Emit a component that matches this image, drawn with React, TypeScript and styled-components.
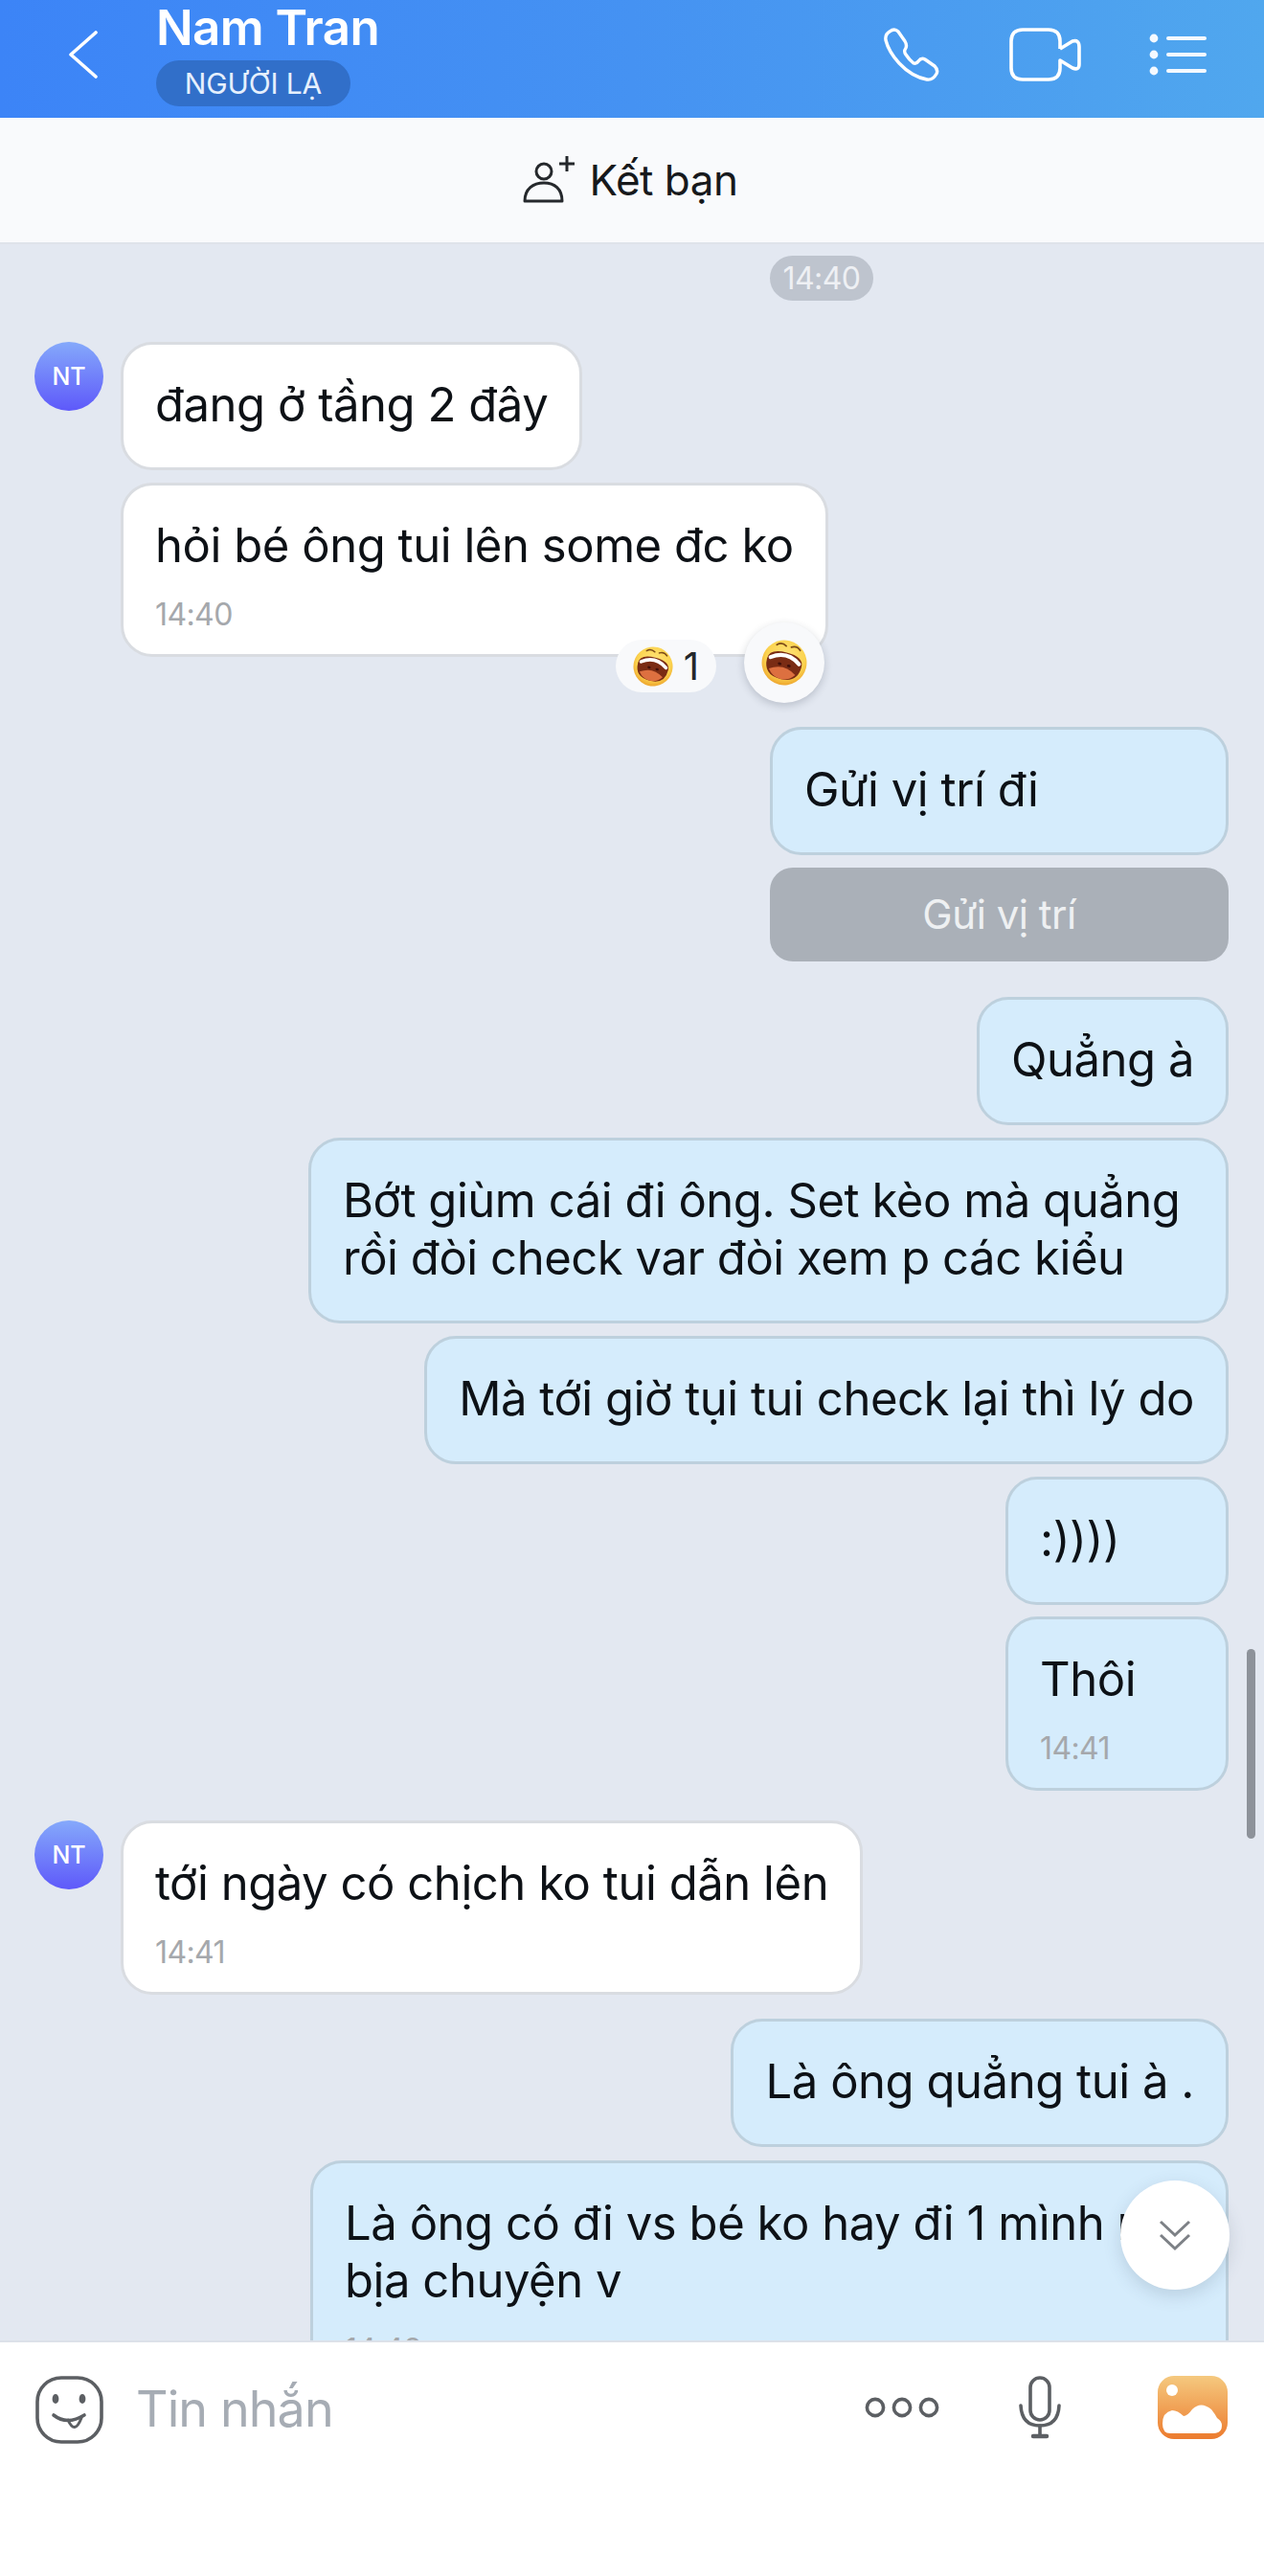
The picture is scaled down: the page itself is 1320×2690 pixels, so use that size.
import React from "react";
import styled, { createGlobalStyle } from "styled-components";

const GlobalStyle = createGlobalStyle`
  html, body { margin: 0; padding: 0; }
  body { font-family: Inter, "Noto Sans", "Liberation Sans", sans-serif; background: #e3e8f1; }
  * { box-sizing: border-box; }
`;

const Screen = styled.div`
  width: 1320px;
  height: 2690px;
  display: flex;
  flex-direction: column;
  overflow: hidden;
  position: relative;
`;

const Header = styled.header`
  height: 123px;
  flex: none;
  display: flex;
  align-items: center;
  padding: 0 60px 10px 70px;
  background: linear-gradient(90deg, #3c84f7 0%, #4592f2 50%, #50a7ee 100%);
`;

const BackIcon = styled.svg`
  width: 34px;
  height: 50px;
  flex: none;
`;

const TitleBlock = styled.div`
  margin-left: 59px;
  align-self: flex-start;
  display: flex;
  flex-direction: column;
  align-items: flex-start;
  padding-top: 3px;
`;

const Name = styled.div`
  font-size: 51px;
  line-height: 52px;
  font-weight: 600;
  letter-spacing: -0.6px;
  color: #fff;
`;

const Badge = styled.div`
  margin-top: 8px;
  width: 203px;
  height: 48px;
  border-radius: 24px;
  background: #316fc9;
  color: #e6f0fd;
  font-size: 30px;
  line-height: 48px;
  text-align: center;
  letter-spacing: -0.1px;
`;

const HeaderActions = styled.div`
  margin-left: auto;
  display: flex;
  align-items: center;
  gap: 71px;
`;

const FriendBar = styled.div`
  height: 132px;
  flex: none;
  display: flex;
  justify-content: center;
  align-items: center;
  gap: 15px;
  background: #f9fafc;
  border-bottom: 2px solid #dfe3ea;
  color: #17191c;
  font-size: 44px;
  letter-spacing: -0.5px;
  padding-right: 4px;
`;

const Chat = styled.main`
  flex: 1;
  min-height: 0;
  overflow: hidden;
  position: relative;
  background: #e3e8f1;
  padding: 12px 37px 0 36px;
`;

const TimePill = styled.div`
  margin-left: 768px;
  width: 108px;
  height: 47px;
  border-radius: 24px;
  background: #bec4ce;
  color: #eef0f4;
  font-size: 32px;
  line-height: 47px;
  text-align: center;
  letter-spacing: -0.6px;
`;

const Received = styled.section<{ $top: number }>`
  display: flex;
  gap: 18px;
  align-items: flex-start;
  margin-top: ${(p) => p.$top}px;
`;

const ReceivedStack = styled.div`
  display: flex;
  flex-direction: column;
  align-items: flex-start;
  gap: 13px;
`;

const Avatar = styled.div`
  width: 72px;
  height: 72px;
  flex: none;
  border-radius: 50%;
  background: linear-gradient(180deg, #85a9fb 0%, #5e59fa 100%);
  color: #fff;
  font-size: 25px;
  font-weight: 500;
  line-height: 72px;
  text-align: center;
`;

const SentRow = styled.div<{ $top: number }>`
  display: flex;
  flex-direction: column;
  align-items: flex-end;
  margin-top: ${(p) => p.$top}px;
`;

const Bubble = styled.div<{ $mine?: boolean; $width?: number }>`
  position: relative;
  border: 3px solid ${(p) => (p.$mine ? "#bdd0dd" : "#d9dce1")};
  background: ${(p) => (p.$mine ? "#d5ecfc" : "#fff")};
  border-radius: 33px;
  padding: 33px 33px 35px;
  width: ${(p) => (p.$width ? `${p.$width}px` : "auto")};
  font-size: 49px;
  line-height: 60px;
  letter-spacing: -0.45px;
  color: #0d1116;
  white-space: nowrap;
`;

const Time = styled.div`
  display: block;
  margin: 20px 0 -16px;
  font-size: 32px;
  line-height: 44px;
  letter-spacing: -0.6px;
  color: #a5a8ac;
`;

const LocationButton = styled.div`
  margin-top: 13px;
  width: 479px;
  height: 98px;
  border-radius: 24px;
  background: #aab0b8;
  color: #eef0f2;
  font-size: 42px;
  line-height: 98px;
  text-align: center;
  letter-spacing: -0.5px;
`;

const ReactionCount = styled.div`
  position: absolute;
  right: 114px;
  bottom: -40px;
  width: 105px;
  height: 55px;
  border-radius: 28px;
  background: #f8f9fb;
  display: flex;
  align-items: center;
  justify-content: center;
  gap: 11px;
  font-size: 40px;
  color: #24272b;
`;

const ReactionButton = styled.div`
  position: absolute;
  right: 1px;
  bottom: -51px;
  width: 84px;
  height: 84px;
  border-radius: 50%;
  background: #f8f9fb;
  box-shadow: 0 3px 8px rgba(40, 50, 70, 0.22);
  display: flex;
  align-items: center;
  justify-content: center;
`;

const ScrollDown = styled.div`
  position: absolute;
  right: 36px;
  bottom: 53px;
  width: 114px;
  height: 114px;
  border-radius: 50%;
  background: #fff;
  box-shadow: 0 6px 18px rgba(60, 80, 100, 0.18);
  display: flex;
  align-items: center;
  justify-content: center;
`;

const ScrollBar = styled.div`
  position: absolute;
  right: 9px;
  top: 1467px;
  width: 9px;
  height: 198px;
  border-radius: 5px;
  background: #8d929a;
`;

const InputBar = styled.footer`
  height: 246px;
  flex: none;
  background: #fff;
  border-top: 2px solid #dce1e9;
  display: flex;
  align-items: flex-start;
  padding: 35px 38px 0 37px;
`;

const Placeholder = styled.div`
  margin-left: 34px;
  font-size: 52px;
  line-height: 70px;
  letter-spacing: -0.9px;
  color: #a6acb4;
`;

const InputActions = styled.div`
  margin-left: auto;
  display: flex;
  align-items: center;
  gap: 83px;
`;

const PhotoSlot = styled.div`
  display: flex;
  margin-left: 18px;
`;

const LaughEmoji = ({ size }: { size: number }) => (
  <svg width={size} height={size} viewBox="0 0 44 44">
    <defs>
      <radialGradient id="laughFace" cx="50%" cy="40%" r="62%">
        <stop offset="0%" stopColor="#ffe680" />
        <stop offset="70%" stopColor="#fbd34f" />
        <stop offset="100%" stopColor="#eca02a" />
      </radialGradient>
    </defs>
    <g transform="rotate(14 22 22)">
      <circle cx="22" cy="22" r="21.5" fill="url(#laughFace)" />
      <path d="M11 7 Q15 3 20 6 M25 6 Q30 3 34 7" stroke="#7b4a18" strokeWidth="1.6" fill="none" strokeLinecap="round" />
      <path d="M5 22 Q5 12 22 12 Q39 12 39 22 Q39 38 22 38 Q5 38 5 22Z" fill="#7a2c14" />
      <path d="M8 20 Q22 10 36 20" stroke="#fff" strokeWidth="3.8" fill="none" strokeLinecap="round" />
      <path d="M9 31 Q22 22 35 31 Q30 38 22 38 Q14 38 9 31Z" fill="#dd7040" />
      <ellipse cx="18" cy="24" rx="1.8" ry="1.3" fill="#40100a" />
      <ellipse cx="27" cy="24" rx="1.8" ry="1.3" fill="#40100a" />
    </g>
  </svg>
);

const PhoneIcon = () => (
  <svg width="62" height="60" viewBox="-2 -3 62 60" fill="none" stroke="#fff" strokeWidth="3.4" strokeLinejoin="round">
    <path d="M2 12 Q1 6 6 3 Q11 -1 15 3 L22 13 Q25 18 22 22 Q21 24 23 27 Q27 33 31 36 Q34 37 36 34 Q39 30 43 32 L53 39 Q57 43 55 47 Q51 54 45 53 Q29 50 16 36 Q5 24 2 12Z" />
  </svg>
);

const VideoIcon = () => (
  <svg width="75" height="56" viewBox="-2 -2 75 56" fill="none" stroke="#fff" strokeWidth="3.6" strokeLinejoin="round">
    <path d="M51 20 V12 Q51 0 39 0 H12 Q0 0 0 12 V40 Q0 52 12 52 H39 Q51 52 51 40 V32 L64 40 Q71 43 71 36 V18 Q71 10 64 12 L51 20" />
  </svg>
);

const ListIcon = () => (
  <svg width="60" height="44" viewBox="0 0 60 44" fill="#f4f9ff">
    <circle cx="5" cy="5" r="4.4" />
    <circle cx="5" cy="22" r="4.4" />
    <circle cx="5" cy="39" r="4.4" />
    <rect x="18" y="3" width="42" height="4" rx="2" />
    <rect x="18" y="20" width="42" height="4" rx="2" />
    <rect x="18" y="37" width="42" height="4" rx="2" />
  </svg>
);

const AddFriendIcon = () => (
  <svg width="55" height="50" viewBox="0 0 55 50" fill="none" stroke="#25282c" strokeWidth="3">
    <circle cx="22" cy="16" r="8" />
    <path d="M2 47 C2 34 11 28 22 28 C33 28 41 34 41 47 Z" strokeLinejoin="round" />
    <path d="M38 8 H54 M46 0 V16" strokeWidth="3" />
  </svg>
);

const StickerIcon = () => (
  <svg width="71" height="71" viewBox="0 0 71 71" fill="none" stroke="#5c5f63" strokeWidth="3.6" strokeLinecap="round">
    <rect x="2" y="2" width="67" height="67" rx="25" />
    <ellipse cx="21" cy="24" rx="3.4" ry="5" fill="#5c5f63" stroke="none" />
    <ellipse cx="49" cy="24" rx="3.4" ry="5" fill="#5c5f63" stroke="none" />
    <path d="M19 41 Q33 52 51 41" />
    <path d="M34 46 Q41 62 48 44" strokeWidth="3" />
  </svg>
);

const DotsIcon = () => (
  <svg width="78" height="24" viewBox="0 0 78 24" fill="none" stroke="#5c5f63" strokeWidth="3.6">
    <circle cx="11" cy="12" r="8.6" />
    <circle cx="39" cy="12" r="8.6" />
    <circle cx="67" cy="12" r="8.6" />
  </svg>
);

const MicIcon = () => (
  <svg width="44" height="66" viewBox="0 0 44 66" fill="none" stroke="#5c5f63" strokeWidth="3.6" strokeLinecap="round">
    <rect x="12" y="2" width="20" height="44" rx="10" />
    <path d="M2 31 Q3 52 22 52 Q41 52 42 31" />
    <path d="M22 52 V62" />
    <path d="M15 63 H29" strokeWidth="4.5" />
  </svg>
);

const PhotoIcon = () => (
  <svg width="73" height="66" viewBox="0 0 73 66">
    <defs>
      <linearGradient id="photoBg" x1="0" y1="0" x2="0" y2="1">
        <stop offset="0%" stopColor="#f5c97f" />
        <stop offset="100%" stopColor="#ec7b2e" />
      </linearGradient>
    </defs>
    <rect width="73" height="66" rx="17" fill="url(#photoBg)" />
    <circle cx="15" cy="15" r="6" fill="#fff" />
    <path d="M5 50 Q5 38 15 36 Q21 36 27 42 Q31 42 36 35 Q45 26 56 35 Q60 40 62 44 Q67 47 67 52 Q67 60 58 60 H13 Q5 60 5 50Z" fill="#fff" />
  </svg>
);

const App = () => {
  return (
    <Screen>
      <GlobalStyle />
      <Header>
        <BackIcon viewBox="0 0 34 50" fill="none" stroke="#fff" strokeWidth="3.6" strokeLinecap="round" strokeLinejoin="round">
          <path d="M30 2 L4 25 L30 48" />
        </BackIcon>
        <TitleBlock>
          <Name>Nam Tran</Name>
          <Badge>NGƯỜI LẠ</Badge>
        </TitleBlock>
        <HeaderActions>
          <PhoneIcon />
          <VideoIcon />
          <ListIcon />
        </HeaderActions>
      </Header>
      <FriendBar>
        <AddFriendIcon />
        <span>Kết bạn</span>
      </FriendBar>
      <Chat>
        <TimePill>14:40</TimePill>
        <Received $top={43}>
          <Avatar>NT</Avatar>
          <ReceivedStack>
            <Bubble>đang ở tầng 2 đây</Bubble>
            <Bubble>
              hỏi bé ông tui lên some đc ko
              <Time>14:40</Time>
              <ReactionCount>
                <LaughEmoji size={42} />1
              </ReactionCount>
              <ReactionButton>
                <LaughEmoji size={48} />
              </ReactionButton>
            </Bubble>
          </ReceivedStack>
        </Received>
        <SentRow $top={73}>
          <Bubble $mine $width={479}>Gửi vị trí đi</Bubble>
          <LocationButton>Gửi vị trí</LocationButton>
        </SentRow>
        <SentRow $top={37}>
          <Bubble $mine>Quẳng à</Bubble>
        </SentRow>
        <SentRow $top={13}>
          <Bubble $mine $width={961}>
            Bớt giùm cái đi ông. Set kèo mà quẳng
            <br />
            rồi đòi check var đòi xem p các kiểu
          </Bubble>
        </SentRow>
        <SentRow $top={13}>
          <Bubble $mine>Mà tới giờ tụi tui check lại thì lý do</Bubble>
        </SentRow>
        <SentRow $top={13}>
          <Bubble $mine $width={233}>:))))</Bubble>
        </SentRow>
        <SentRow $top={12}>
          <Bubble $mine $width={233}>
            Thôi
            <Time>14:41</Time>
          </Bubble>
        </SentRow>
        <Received $top={31}>
          <Avatar>NT</Avatar>
          <ReceivedStack>
            <Bubble>
              tới ngày có chịch ko tui dẫn lên
              <Time>14:41</Time>
            </Bubble>
          </ReceivedStack>
        </Received>
        <SentRow $top={25}>
          <Bubble $mine>Là ông quẳng tui à .</Bubble>
        </SentRow>
        <SentRow $top={14}>
          <Bubble $mine $width={959}>
            Là ông có đi vs bé ko hay đi 1 mình r
            <br />
            bịa chuyện v
            <Time>14:42</Time>
          </Bubble>
        </SentRow>
        <ScrollBar />
        <ScrollDown>
          <svg width="36" height="34" viewBox="0 0 36 34" fill="none" stroke="#7d8186" strokeWidth="3">
            <path d="M3 3 L18 17 L33 3" />
            <path d="M3 17 L18 31 L33 17" />
          </svg>
        </ScrollDown>
      </Chat>
      <InputBar>
        <StickerIcon />
        <Placeholder>Tin nhắn</Placeholder>
        <InputActions>
          <DotsIcon />
          <MicIcon />
          <PhotoSlot>
            <PhotoIcon />
          </PhotoSlot>
        </InputActions>
      </InputBar>
    </Screen>
  );
};

export default App;
